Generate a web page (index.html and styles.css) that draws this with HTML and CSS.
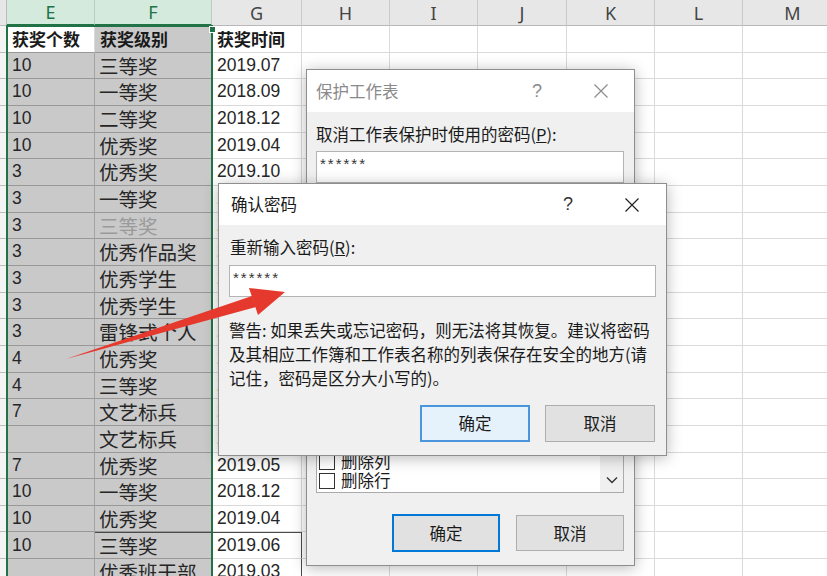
FILE: index.html
```html
<!DOCTYPE html>
<html lang="zh-CN">
<head>
<meta charset="utf-8">
<title>确认密码</title>
<link rel="stylesheet" href="styles.css">
</head>
<body>
<div class="sheet">
  <div class="row hdr"><i class="lead"></i><div class="ch sel">E</div><div class="ch sel">F</div><div class="ch">G</div><div class="ch">H</div><div class="ch">I</div><div class="ch">J</div><div class="ch">K</div><div class="ch">L</div><div class="ch">M</div></div>
  <div class="row title"><i class="lead"></i><div class="c act">获奖个数</div><div class="c s">获奖级别</div><div class="c">获奖时间</div><i></i><i></i><i></i><i></i><i></i><i></i></div>
  <div class="row"><i class="lead"></i><div class="c s n">10</div><div class="c s">三等奖</div><div class="c n">2019.07</div><i></i><i></i><i></i><i></i><i></i><i></i></div>
  <div class="row"><i class="lead"></i><div class="c s n">10</div><div class="c s">一等奖</div><div class="c n">2018.09</div><i></i><i></i><i></i><i></i><i></i><i></i></div>
  <div class="row"><i class="lead"></i><div class="c s n">10</div><div class="c s">二等奖</div><div class="c n">2018.12</div><i></i><i></i><i></i><i></i><i></i><i></i></div>
  <div class="row"><i class="lead"></i><div class="c s n">10</div><div class="c s">优秀奖</div><div class="c n">2019.04</div><i></i><i></i><i></i><i></i><i></i><i></i></div>
  <div class="row"><i class="lead"></i><div class="c s n">3</div><div class="c s">优秀奖</div><div class="c n">2019.10</div><i></i><i></i><i></i><i></i><i></i><i></i></div>
  <div class="row"><i class="lead"></i><div class="c s n">3</div><div class="c s">一等奖</div><div class="c n">2019.06</div><i></i><i></i><i></i><i></i><i></i><i></i></div>
  <div class="row"><i class="lead"></i><div class="c s n">3</div><div class="c s faded">三等奖</div><div class="c n">2019.05</div><i></i><i></i><i></i><i></i><i></i><i></i></div>
  <div class="row"><i class="lead"></i><div class="c s n">3</div><div class="c s">优秀作品奖</div><div class="c n">2018.11</div><i></i><i></i><i></i><i></i><i></i><i></i></div>
  <div class="row"><i class="lead"></i><div class="c s n">3</div><div class="c s">优秀学生</div><div class="c n">2019.03</div><i></i><i></i><i></i><i></i><i></i><i></i></div>
  <div class="row"><i class="lead"></i><div class="c s n">3</div><div class="c s">优秀学生</div><div class="c n">2019.01</div><i></i><i></i><i></i><i></i><i></i><i></i></div>
  <div class="row"><i class="lead"></i><div class="c s n">3</div><div class="c s">雷锋式个人</div><div class="c n">2019.03</div><i></i><i></i><i></i><i></i><i></i><i></i></div>
  <div class="row"><i class="lead"></i><div class="c s n">4</div><div class="c s">优秀奖</div><div class="c n">2018.12</div><i></i><i></i><i></i><i></i><i></i><i></i></div>
  <div class="row"><i class="lead"></i><div class="c s n">4</div><div class="c s">三等奖</div><div class="c n">2019.06</div><i></i><i></i><i></i><i></i><i></i><i></i></div>
  <div class="row"><i class="lead"></i><div class="c s n">7</div><div class="c s">文艺标兵</div><div class="c n">2019.07</div><i></i><i></i><i></i><i></i><i></i><i></i></div>
  <div class="row"><i class="lead"></i><div class="c s n"></div><div class="c s">文艺标兵</div><div class="c n">2018.10</div><i></i><i></i><i></i><i></i><i></i><i></i></div>
  <div class="row"><i class="lead"></i><div class="c s n">7</div><div class="c s">优秀奖</div><div class="c n">2019.05</div><i></i><i></i><i></i><i></i><i></i><i></i></div>
  <div class="row"><i class="lead"></i><div class="c s n">10</div><div class="c s">一等奖</div><div class="c n">2018.12</div><i></i><i></i><i></i><i></i><i></i><i></i></div>
  <div class="row"><i class="lead"></i><div class="c s n">10</div><div class="c s">优秀奖</div><div class="c n">2019.04</div><i></i><i></i><i></i><i></i><i></i><i></i></div>
  <div class="row"><i class="lead"></i><div class="c s n">10</div><div class="c s boxtop">三等奖</div><div class="c n boxed">2019.06</div><i></i><i></i><i></i><i></i><i></i><i></i></div>
  <div class="row"><i class="lead"></i><div class="c s n"></div><div class="c s">优秀班干部</div><div class="c n boxside">2019.03</div><i></i><i></i><i></i><i></i><i></i><i></i></div>
</div>

<div class="selbox"></div>
<div class="handle"></div>

<div class="dlg protect">
  <div class="titlebar">
    <span class="ttl">保护工作表</span>
    <span class="tbtn help">?</span>
    <span class="tbtn close"><svg width="16" height="16" viewBox="0 0 16 16"><path d="M1.5 1.5 L14.5 14.5 M14.5 1.5 L1.5 14.5" stroke="#8c8c8c" stroke-width="1.2" fill="none"/></svg></span>
  </div>
  <div class="dbody">
    <div class="lbl">取消工作表保护时使用的密码(<u>P</u>):</div>
    <div class="input"><span class="stars">******</span></div>
    <div class="lbl spacer">允许此工作表的所有用户进行(<u>O</u>):</div>
    <div class="listbox">
      <div class="items">
        <div class="item"><span class="cb"></span>删除列</div>
        <div class="item"><span class="cb"></span>删除行</div>
      </div>
      <div class="vscroll"><svg width="12" height="8" viewBox="0 0 12 8"><polyline points="1,1.5 6,6.5 11,1.5" stroke="#333" stroke-width="1.4" fill="none"/></svg></div>
    </div>
    <div class="btns">
      <div class="btn def">确定</div>
      <div class="btn">取消</div>
    </div>
  </div>
</div>

<div class="dlg confirm">
  <div class="titlebar">
    <span class="ttl">确认密码</span>
    <span class="tbtn help">?</span>
    <span class="tbtn close"><svg width="16" height="16" viewBox="0 0 16 16"><path d="M1.5 1.5 L14.5 14.5 M14.5 1.5 L1.5 14.5" stroke="#222" stroke-width="1.2" fill="none"/></svg></span>
  </div>
  <div class="dbody">
    <div class="lbl">重新输入密码(<u>R</u>):</div>
    <div class="input"><span class="stars">******</span></div>
    <div class="warn">警告: 如果丢失或忘记密码，则无法将其恢复。建议将密码<br>及其相应工作簿和工作表名称的列表保存在安全的地方(请<br>记住，密码是区分大小写的)。</div>
    <div class="btns">
      <div class="btn hot">确定</div>
      <div class="btn">取消</div>
    </div>
  </div>
</div>

<svg class="arrow" width="827" height="576" viewBox="0 0 827 576">
  <polygon points="66,359 252,296 256,307" fill="#e6392e"/>
  <polygon points="249,288 285,292 258,315" fill="#e6392e"/>
</svg>
</body>
</html>
```

FILE: styles.css
```css
html, body {
  margin: 0;
  padding: 0;
}
body {
  width: 827px;
  height: 576px;
  overflow: hidden;
  position: relative;
  background: #fff;
  font-family: "Noto Sans CJK SC", "Noto Sans", sans-serif;
  color: #262626;
}

/* ---------- spreadsheet ---------- */
.sheet {
  display: flex;
  flex-direction: column;
}
.row {
  display: grid;
  grid-template-columns: 7px 88px 117px 90px 88px 88px 89px 88px 88px 100px;
  height: 26.67px;
  flex: none;
}
.row.hdr {
  height: 26px;
}
.row > * {
  box-sizing: border-box;
  border-right: 1px solid #dadada;
  border-bottom: 1px solid #dadada;
  min-width: 0;
}
.row > i {
  display: block;
}
.row > .lead {
  background: #f4f4f4;
  border-right: 1px solid #bdbdbd;
  border-bottom: 1px solid #bdbdbd;
}
.ch {
  background: #e7e7e7;
  border-right-color: #c9c9c9 !important;
  border-bottom-color: #b9b9b9 !important;
  display: flex;
  align-items: center;
  justify-content: center;
  font-family: "Noto Sans", sans-serif;
  font-size: 18px;
  color: #444;
}
.hdr .lead {
  background: #e7e7e7;
}
.ch.sel {
  background: #d3eadc;
  color: #217346;
  border-right-color: #b5d2c0 !important;
  border-bottom: 2px solid #217346 !important;
}
.c {
  display: flex;
  align-items: center;
  padding-left: 4px;
  white-space: nowrap;
  font-size: 19.5px;
  line-height: 1;
}
.c.n {
  font-family: "Liberation Sans", sans-serif;
  font-size: 17.5px;
  padding-left: 5px;
}
.c.s {
  background: #c9c9c9;
  border-right-color: #a3a3a3;
  border-bottom-color: #989898;
}
.title .c {
  font-size: 17px;
  font-weight: 700;
  padding-left: 5px;
  color: #1a1a1a;
}
.title .c.act {
  background: #fff;
  border-bottom-color: #989898;
}
.c.faded {
  color: #9a9a9a;
}
.c.boxtop {
  border-top: 1px solid #4a4a4a;
}
.c.boxed {
  border-top: 1px solid #4a4a4a;
  border-right: 1px solid #4a4a4a;
}
.c.boxside {
  border-right: 1px solid #4a4a4a;
}

/* selection outline (overlay) */
.selbox {
  position: absolute;
  left: 6px;
  top: 25px;
  width: 207px;
  height: 600px;
  box-sizing: border-box;
  border: 2px solid #217346;
  pointer-events: none;
}
.handle {
  position: absolute;
  left: 209px;
  top: 26px;
  width: 5px;
  height: 5px;
  background: #217346;
  border: 1px solid #fff;
}

/* ---------- dialogs ---------- */
.dlg {
  position: absolute;
  box-sizing: border-box;
  background: #f0f0f0;
  border: 1px solid #8e8e8e;
  box-shadow: 0 2px 14px rgba(0, 0, 0, 0.28);
  display: flex;
  flex-direction: column;
  font-size: 16.5px;
  color: #1a1a1a;
}
.titlebar {
  height: 41px;
  flex: none;
  background: #fff;
  display: flex;
  align-items: center;
  padding-left: 9px;
}
.ttl {
  flex: 1;
  line-height: 1;
}
.tbtn {
  width: 46px;
  display: flex;
  align-items: center;
  justify-content: center;
}
.help {
  font-family: "Liberation Sans", sans-serif;
  font-size: 18px;
  margin-right: 18px;
  color: #333;
}
.dbody {
  flex: 1;
  display: flex;
  flex-direction: column;
}
.lbl {
  line-height: 20px;
  height: 20px;
}
.input {
  height: 32px;
  box-sizing: border-box;
  background: #fff;
  border: 1px solid #b4b4b4;
  padding: 4px 3px;
}
.stars {
  display: block;
  font-family: "Liberation Sans", sans-serif;
  font-size: 15px;
  line-height: 15px;
  letter-spacing: 2px;
  color: #333;
}
.btns {
  display: flex;
  justify-content: flex-end;
  align-items: center;
}
.btn {
  box-sizing: border-box;
  display: flex;
  align-items: center;
  justify-content: center;
  background: #e1e1e1;
  border: 1px solid #adadad;
  line-height: 1;
}

/* protect sheet dialog (behind) */
.protect {
  left: 306px;
  top: 69px;
  width: 329px;
  height: 497px;
}
.protect .titlebar {
  height: 42px;
}
.protect .ttl,
.protect .help {
  color: #8a8a8a;
}
.protect .dbody {
  padding: 11px 10px 13px 9px;
}
.protect .lbl {
  height: 22px;
  line-height: 22px;
}
.protect .input {
  margin-top: 6px;
}
.protect .spacer {
  margin-top: 12px;
}
.listbox {
  flex: 1;
  margin-top: 6px;
  background: #fff;
  border: 1px solid #ababab;
  display: flex;
}
.items {
  flex: 1;
  display: flex;
  flex-direction: column;
  justify-content: flex-end;
  padding-bottom: 2px;
}
.item {
  height: 19px;
  display: flex;
  align-items: center;
  line-height: 1;
}
.cb {
  width: 16px;
  height: 16px;
  box-sizing: border-box;
  border: 1px solid #333;
  background: #fff;
  margin: 0 6px 0 2px;
}
.vscroll {
  width: 23px;
  background: #f0f0f0;
  display: flex;
  flex-direction: column;
  justify-content: flex-end;
  align-items: center;
  padding-bottom: 8px;
  box-sizing: border-box;
}
.protect .btns {
  margin-top: 21px;
  gap: 16px;
}
.protect .btn {
  width: 108px;
  height: 36px;
}
.protect .btn.def {
  height: 38px;
  border: 2px solid #0078d7;
}

/* confirm password dialog (front) */
.confirm {
  left: 218px;
  top: 183px;
  width: 449px;
  height: 273px;
}
.confirm .titlebar {
  padding-left: 12px;
}
.confirm .close {
  margin-right: 11px;
}
.confirm .dbody {
  padding: 12px 10px 13px 10px;
}
.confirm .lbl {
  padding-left: 1px;
}
.confirm .input {
  margin-top: 8px;
}
.warn {
  margin-top: 21px;
  line-height: 24px;
  white-space: nowrap;
}
.confirm .btns {
  margin-top: 15px;
  gap: 15px;
  padding-right: 1px;
}
.confirm .btn {
  width: 110px;
  height: 37px;
}
.confirm .btn.hot {
  background: #e5f1fb;
  border: 2px solid #4a95dc;
}
.protect .close {
  margin-right: 10px;
}

/* annotation arrow */
.arrow {
  position: absolute;
  left: 0;
  top: 0;
  pointer-events: none;
}
```
